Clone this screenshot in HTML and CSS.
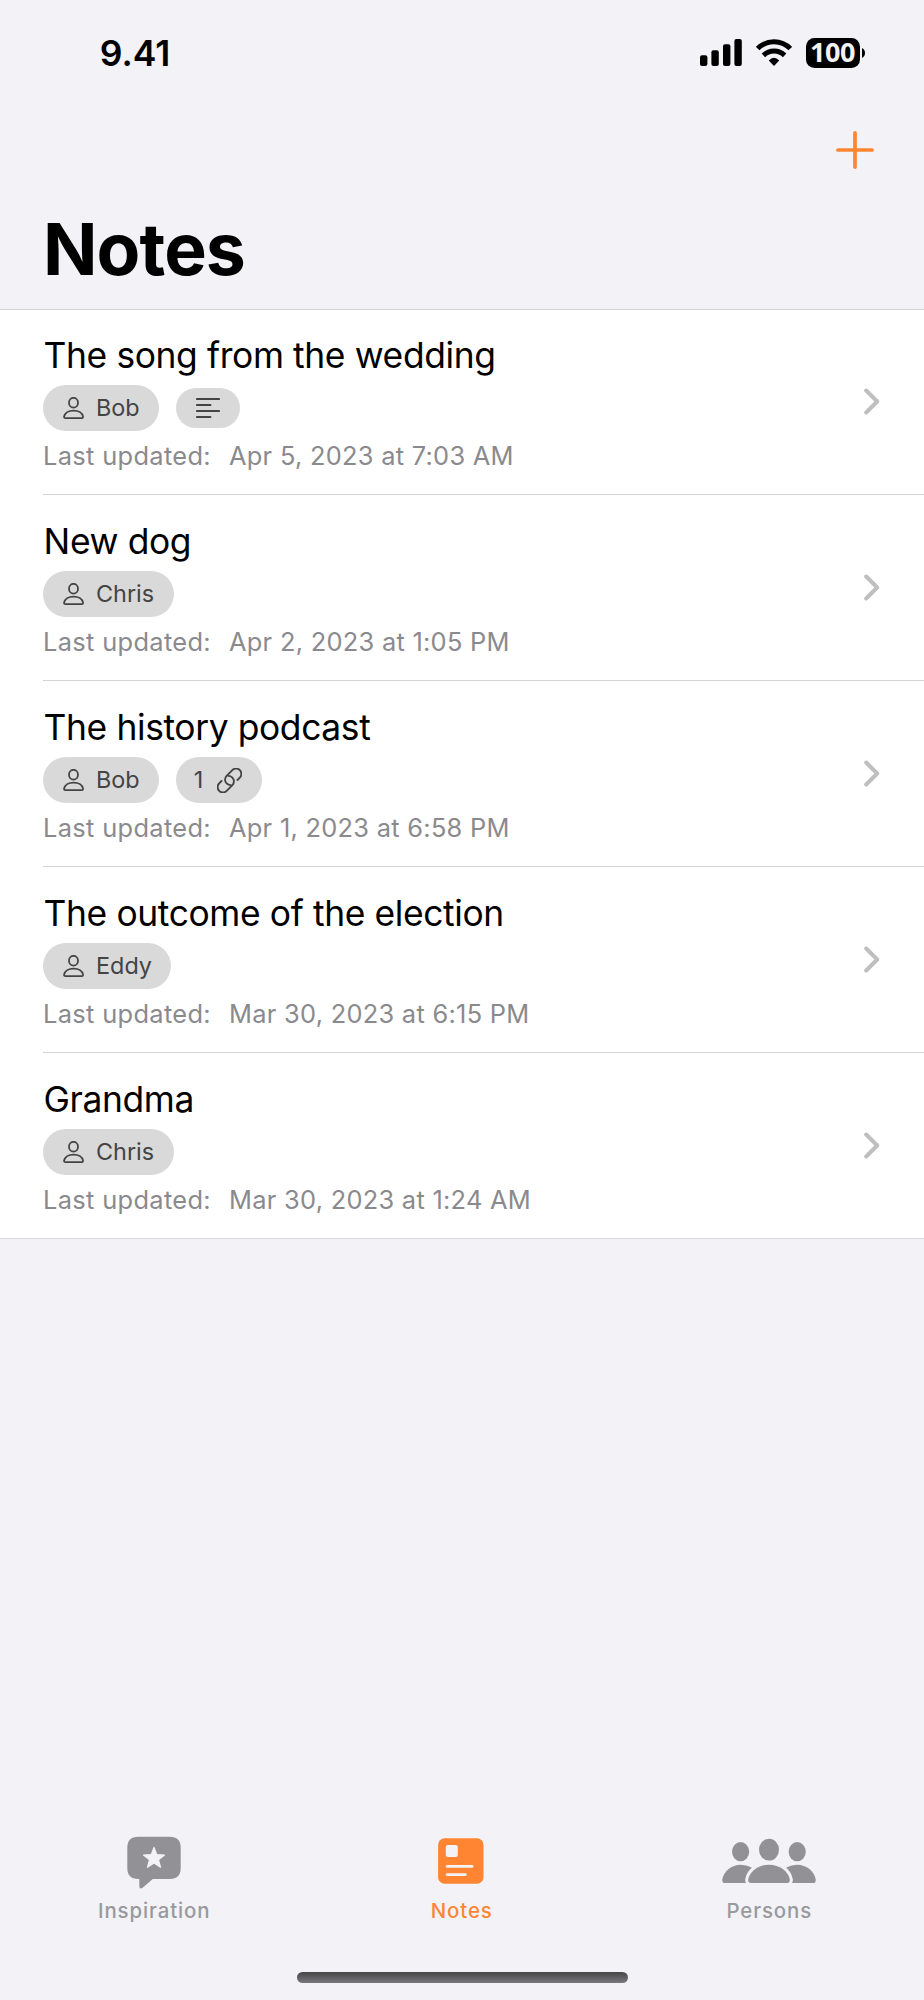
FILE: index.html
```
<!DOCTYPE html>
<html lang="en">
<head>
<meta charset="utf-8">
<title>Notes</title>
<link rel="stylesheet" href="styles.css">
</head>
<body>
<svg class="defs" width="0" height="0" aria-hidden="true">
  <symbol id="person" viewBox="0 0 21 22">
    <g fill="none" stroke="currentColor" stroke-width="1.8">
      <ellipse cx="10.5" cy="5.7" rx="4.5" ry="4.9"/>
      <path d="M2.4 21.1H18.8Q20.2 21.1 20 19.6C19.4 16.2 15.8 13.6 10.6 13.6S1.8 16.2 1.1 19.6Q.9 21.1 2.4 21.1Z"/>
    </g>
  </symbol>
  <symbol id="chevron" viewBox="0 0 16 27">
    <path d="M2.2 2.5 13.2 13.5 2.2 24.5" fill="none" stroke="currentColor" stroke-width="4" stroke-linecap="round" stroke-linejoin="round"/>
  </symbol>
</svg>
<div class="screen">
  <header class="status">
    <span class="time">9.41</span>
    <div class="indicators">
      <svg class="signal" width="42" height="27" viewBox="0 0 42 27"><rect x="0" y="16.3" width="7.4" height="10.7" rx="2"/><rect x="11.4" y="11.3" width="7.4" height="15.7" rx="2"/><rect x="23" y="5.3" width="7.4" height="21.7" rx="2"/><rect x="34.4" y="0" width="7.4" height="27" rx="2"/></svg>
      <svg class="wifi" width="36" height="27" viewBox="0 0 36 27"><g fill="none" stroke="#000" stroke-width="5"><path d="M1.7 9.6A22.7 22.7 0 0 1 34.3 9.6"/><path d="M7.4 16.4A15.2 15.2 0 0 1 28.6 16.4"/></g><path d="M12.8 21.4Q18 16.2 23.2 21.4L18.5 26.4Q18 27 17.5 26.4Z"/></svg>
      <div class="battery"><span class="level">100</span></div>
      <svg class="nub" width="3" height="10" viewBox="0 0 3 10"><path d="M0 0Q3 1.6 3 5T0 10Z"/></svg>
    </div>
  </header>
  <div class="nav">
    <svg width="38" height="38" viewBox="0 0 38 38"><path d="M19 1.9V36.1M1.9 19H36.1" stroke="#ff8533" stroke-width="3.7" stroke-linecap="round"/></svg>
  </div>
  <h1 class="heading">Notes</h1>
  <main class="list">
    <article class="row">
      <div class="body">
        <h2 class="title">The song from the wedding</h2>
        <div class="pills">
          <span class="pill"><svg width="21" height="22"><use href="#person"/></svg>Bob</span>
          <span class="pill short"><svg width="24" height="20" viewBox="0 0 24 20"><path d="M.9 1H23.1M.9 7H14.5M.9 13H23.1M.9 19H14.5" stroke="currentColor" stroke-width="1.9" stroke-linecap="round"/></svg></span>
        </div>
        <p class="meta"><span class="label">Last updated:</span><span>Apr 5, 2023 at 7:03 AM</span></p>
      </div>
      <svg class="chevron" width="16" height="27"><use href="#chevron"/></svg>
    </article>
    <article class="row">
      <div class="body">
        <h2 class="title">New dog</h2>
        <div class="pills">
          <span class="pill"><svg width="21" height="22"><use href="#person"/></svg>Chris</span>
        </div>
        <p class="meta"><span class="label">Last updated:</span><span>Apr 2, 2023 at 1:05 PM</span></p>
      </div>
      <svg class="chevron" width="16" height="27"><use href="#chevron"/></svg>
    </article>
    <article class="row">
      <div class="body">
        <h2 class="title">The history podcast</h2>
        <div class="pills">
          <span class="pill"><svg width="21" height="22"><use href="#person"/></svg>Bob</span>
          <span class="pill links"><span class="count">1</span><svg width="25" height="25" viewBox="-12.5 -12.5 25 25"><g transform="rotate(-45)" fill="none" stroke="currentColor" stroke-width="1.9" stroke-linecap="round"><path d="M-6-5.3H-9.3A5.3 5.3 0 0 0-9.3 5.3H-1.2A5.3 5.3 0 0 0 4.1 0Q4.1-2.6 2.4-4.2"/><path d="M6 5.3H9.3A5.3 5.3 0 0 0 9.3-5.3H1.2A5.3 5.3 0 0 0-4.1 0Q-4.1 2.6-2.4 4.2"/></g></svg></span>
        </div>
        <p class="meta"><span class="label">Last updated:</span><span>Apr 1, 2023 at 6:58 PM</span></p>
      </div>
      <svg class="chevron" width="16" height="27"><use href="#chevron"/></svg>
    </article>
    <article class="row">
      <div class="body">
        <h2 class="title">The outcome of the election</h2>
        <div class="pills">
          <span class="pill"><svg width="21" height="22"><use href="#person"/></svg>Eddy</span>
        </div>
        <p class="meta"><span class="label">Last updated:</span><span>Mar 30, 2023 at 6:15 PM</span></p>
      </div>
      <svg class="chevron" width="16" height="27"><use href="#chevron"/></svg>
    </article>
    <article class="row">
      <div class="body">
        <h2 class="title">Grandma</h2>
        <div class="pills">
          <span class="pill"><svg width="21" height="22"><use href="#person"/></svg>Chris</span>
        </div>
        <p class="meta"><span class="label">Last updated:</span><span>Mar 30, 2023 at 1:24 AM</span></p>
      </div>
      <svg class="chevron" width="16" height="27"><use href="#chevron"/></svg>
    </article>
  </main>
  <nav class="tabs">
    <div class="tab">
      <svg width="100" height="60" viewBox="0 0 100 60"><path d="M34.3 1.8H65.7Q76.7 1.8 76.7 12.8V33Q76.7 44 65.7 44H48.8L38.6 52.8Q35.3 54.8 35.3 51V44H34.3Q23.3 44 23.3 33V12.8Q23.3 1.8 34.3 1.8Z" fill="#929296"/><path d="M50 12.4 52.8 19.6 60.5 20 54.5 24.8 56.5 32.2 50 28.1 43.5 32.2 45.5 24.8 39.5 20 47.2 19.6Z" fill="#f2f2f7" stroke="#f2f2f7" stroke-width="1.2" stroke-linejoin="round"/></svg>
      <span>Inspiration</span>
    </div>
    <div class="tab active">
      <svg width="100" height="60" viewBox="0 0 100 60"><rect x="27.1" y="3.3" width="45.4" height="45.4" rx="6.5" fill="#ff8533"/><rect x="34.8" y="10" width="12" height="12" rx="2" fill="#f2f2f7"/><path d="M36.1 31.4H61.1M36.1 39.6H54.4" stroke="#f2f2f7" stroke-width="2.8" stroke-linecap="round"/></svg>
      <span>Notes</span>
    </div>
    <div class="tab">
      <svg width="100" height="60" viewBox="0 0 100 60"><g fill="#929296"><ellipse cx="21.6" cy="16.7" rx="8.6" ry="9.6"/><ellipse cx="78.2" cy="16.7" rx="8.6" ry="9.6"/><path d="M6 48Q3 48 3.3 44.4C4.6 36.2 12.6 29.7 21.6 29.7Q27.6 29.7 32.6 32.4L36 48Z"/><path d="M94 48Q97 48 96.7 44.4C95.4 36.2 87.4 29.7 78.4 29.7Q72.4 29.7 67.4 32.4L64 48Z"/></g><path d="M32 48Q29 48 29.2 44.6C30.6 36.2 39.4 29.7 50 29.7S69.4 36.2 70.8 44.6Q71 48 68 48Z" fill="#f2f2f7" stroke="#f2f2f7" stroke-width="6"/><path d="M32 48Q29 48 29.2 44.6C30.6 36.2 39.4 29.7 50 29.7S69.4 36.2 70.8 44.6Q71 48 68 48Z" fill="#929296"/><ellipse cx="50" cy="14.7" rx="10" ry="10.9" fill="#929296"/></svg>
      <span>Persons</span>
    </div>
  </nav>
  <div class="home"></div>
</div>
</body>
</html>
```
FILE: styles.css
```
* { box-sizing: border-box; }
body { margin: 0; background: #f2f2f7; font-family: Inter, "Liberation Sans", sans-serif; color: #000; }
h1, h2, p { margin: 0; }
svg { display: block; flex: none; }
.defs { position: absolute; }

.screen { width: 924px; height: 2000px; display: flex; flex-direction: column; background: #f2f2f7; }

.status { height: 105px; flex: none; display: flex; align-items: center; justify-content: space-between; padding: 0 59px 0 99.7px; }
.time { padding-top: 2px; font-size: 35.5px; font-weight: 600; line-height: 44px; }
.indicators { display: flex; align-items: center; }
.wifi { margin-left: 14px; }
.battery { margin-left: 14px; width: 54px; height: 30px; border-radius: 8.5px; background: #000; display: flex; align-items: center; justify-content: center; }
.level { padding-right: 1px; font-family: "Open Sans", sans-serif; font-size: 27px; font-weight: 700; line-height: 28px; height: 30px; color: #f2f2f7; letter-spacing: -0.4px; }
.nub { margin-left: 2px; }

.nav { height: 90px; flex: none; display: flex; align-items: center; justify-content: flex-end; padding-right: 50px; }
.heading { height: 114px; flex: none; padding: 11px 43px 0; font-size: 71.5px; font-weight: 700; line-height: 86px; letter-spacing: -0.9px; }

.list { flex: none; background: #fff; box-shadow: inset 0 1px #d4d4d7; border-bottom: 1px solid #d9d9dc; }
.row { height: 186px; display: flex; align-items: center; padding-right: 44px; margin-left: 43px; border-bottom: 1px solid #d4d4d6; }
.row:last-child { height: 185px; border-bottom: 0; }
.body { flex: 1; align-self: flex-start; padding-top: 25px; }
.chevron { color: #bfbfbf; }
.title { padding-left: 0.6px; font-size: 35.4px; font-weight: 400; line-height: 44px; letter-spacing: -0.38px; }
.pills { margin-top: 7px; height: 46px; display: flex; align-items: center; gap: 17px; }
.pill { height: 46px; border-radius: 23px; display: flex; align-items: center; gap: 12px; padding: 0 19.5px 0 20px; background: #d9d9d9; color: #444; font-size: 23.4px; line-height: 30px; letter-spacing: 0; }
.pill.short { height: 40px; border-radius: 20px; padding: 0 20px; }
.pill.links { padding: 0 20px 0 17.5px; gap: 0; }
.count { width: 23px; }
.meta { margin-top: 9px; display: flex; font-size: 25.4px; line-height: 32px; color: #8a8a8e; letter-spacing: 0.28px; }
.label { width: 186px; letter-spacing: 0.34px; }

.tabs { margin-top: auto; width: 922.5px; height: 136px; flex: none; display: flex; }
.tab { flex: 1; display: flex; flex-direction: column; align-items: center; font-size: 20.4px; font-weight: 500; line-height: 26px; letter-spacing: 0.9px; color: #99999d; }
.tab span { margin-top: 3px; padding-left: 1px; }
.active { color: #ff8533; }

.home { flex: none; align-self: center; width: 331px; height: 11px; margin: 0.6px 0 17.4px; border-radius: 5.5px; background: linear-gradient(#454547, #7a7a7c); }
```
